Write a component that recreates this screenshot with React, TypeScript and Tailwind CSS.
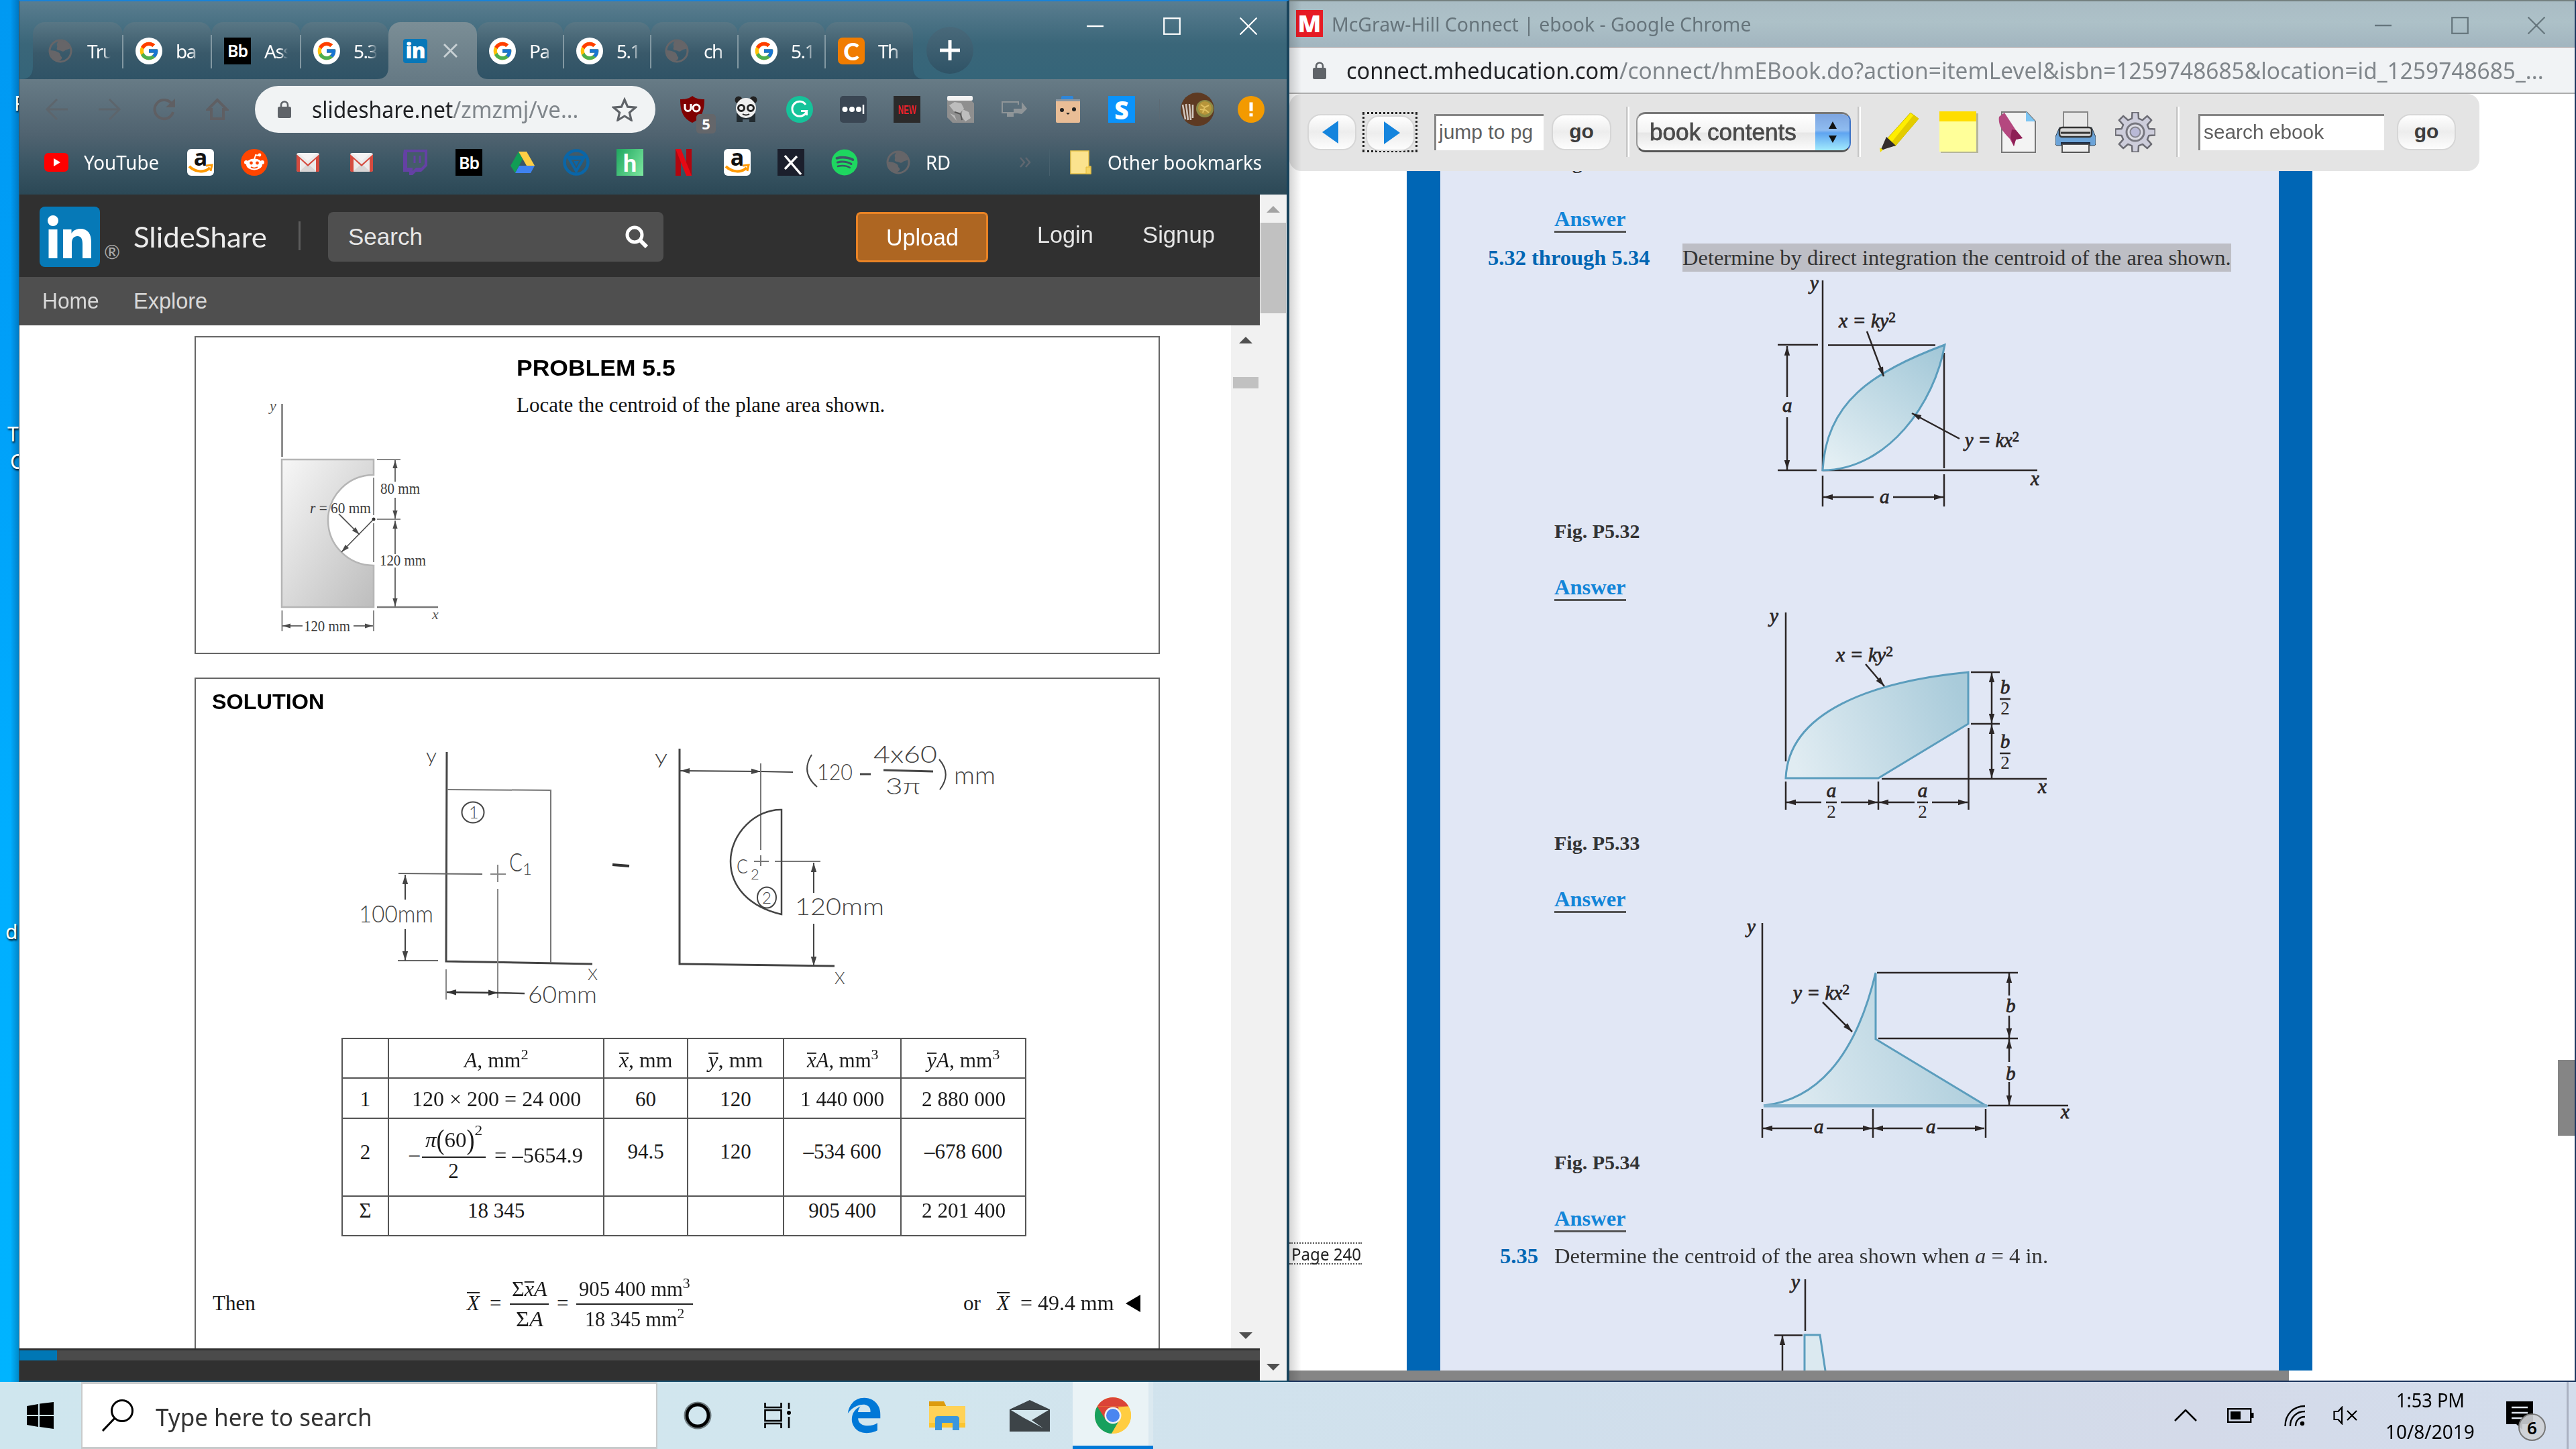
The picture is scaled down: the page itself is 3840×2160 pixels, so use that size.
import React, { useLayoutEffect, useRef, useState } from "react";
import { FcGoogle } from "react-icons/fc";
import { FaSpotify } from "react-icons/fa";
import { FaEdgeLegacy } from "react-icons/fa6";

/* ---------- helpers ---------- */

// Stretches or squeezes one line of text to the width of its box.
function Fit({ className = "", children }: { className?: string; children: React.ReactNode }) {
  const outer = useRef<HTMLSpanElement>(null);
  const inner = useRef<HTMLSpanElement>(null);
  const [scale, setScale] = useState(1);
  useLayoutEffect(() => {
    if (outer.current && inner.current && inner.current.offsetWidth > 0) {
      setScale(outer.current.clientWidth / inner.current.offsetWidth);
    }
  }, []);
  return (
    <span ref={outer} className={`inline-block shrink-0 whitespace-nowrap ${className}`}>
      <span ref={inner} className="inline-block origin-left" style={{ transform: `scaleX(${scale})` }}>
        {children}
      </span>
    </span>
  );
}

type ArrProps = { p: [number, number, number, number]; start?: boolean; end?: boolean; c?: string; w?: number; s?: number };
// Line with optional solid arrow heads.
function Arr({ p, start, end, c = "#2b2626", w = 2.5, s = 14 }: ArrProps) {
  const [x1, y1, x2, y2] = p;
  const len = Math.hypot(x2 - x1, y2 - y1) || 1;
  const ux = (x2 - x1) / len;
  const uy = (y2 - y1) / len;
  const h = s * 0.3;
  const head = (x: number, y: number, d: number) =>
    `${x},${y} ${x - d * ux * s - uy * h},${y - d * uy * s + ux * h} ${x - d * ux * s + uy * h},${y - d * uy * s - ux * h}`;
  return (
    <g>
      <line x1={x1} y1={y1} x2={x2} y2={y2} stroke={c} strokeWidth={w} />
      {end && <polygon points={head(x2, y2, 1)} fill={c} />}
      {start && <polygon points={head(x1, y1, -1)} fill={c} />}
    </g>
  );
}

function L({ d, c = "#2b2626", w = 2.5 }: { d: string; c?: string; w?: number }) {
  return <path d={d} stroke={c} strokeWidth={w} fill="none" />;
}

type TxProps = { x: number; y: number; s: number; w?: number; c?: string; className?: string; children: React.ReactNode };
function Tx({ x, y, s, w, c = "#333", className = "", children }: TxProps) {
  return (
    <text x={x} y={y} fontSize={s} fill={c} className={className} textLength={w} lengthAdjust={w ? "spacingAndGlyphs" : undefined}>
      {children}
    </text>
  );
}

/* ---------- small icons ---------- */

const Globe = () => (
  <svg viewBox="0 0 40 40" className="h-10 w-10">
    <circle cx="20" cy="20" r="16" fill="none" stroke="#666568" strokeWidth="3" />
    <path d="M17 5c9-2 16 3 18 11-3 2-6 1-9 4-3 2-5-1-8-1-3 0-4-2-3-4 1-3-1-4 0-6zM5 19c4 0 9 1 12 3 4 2 2 5 5 7 1 3-2 5-5 6C9 33 4 27 5 19z" fill="#666568" />
  </svg>
);
const GIcon = () => (
  <span className="flex h-10 w-10 items-center justify-center rounded-full bg-white">
    <FcGoogle className="h-8 w-8" />
  </span>
);
const Bb = () => (
  <span className="flex h-10 w-10 items-center justify-center bg-black font-['Noto_Sans'] text-[25px] font-semibold tracking-[-1px] text-white">Bb</span>
);
const Chegg = () => (
  <span className="flex h-10 w-10 items-center justify-center rounded-[7px] bg-[#f07c00] font-['Lato'] text-[36px] leading-none font-black text-white">C</span>
);
const InIcon = () => (
  <span className="flex h-9 w-9 items-center justify-center rounded-[4px] bg-[#0877b8] font-['Open_Sans'] text-[31px] leading-none font-extrabold tracking-[-1px] text-white">in</span>
);
const Amazon = () => (
  <span className="relative flex h-10 w-10 items-start justify-center overflow-hidden rounded-[6px] bg-white">
    <span className="font-['Open_Sans'] text-[34px] leading-[24px] font-bold text-[#111]">a</span>
    <svg viewBox="0 0 40 40" className="absolute inset-0 h-10 w-10">
      <path d="M3 26c9 9 23 10 31 2" stroke="#f90" strokeWidth="4" fill="none" />
      <path d="M28 25l9-1-2 9" stroke="#f90" strokeWidth="3" fill="none" />
    </svg>
  </span>
);
const Reddit = () => (
  <span className="flex h-10 w-10 items-center justify-center rounded-full bg-[#ff4500]">
    <svg viewBox="0 0 40 40" className="h-10 w-10">
      <ellipse cx="20" cy="23" rx="12" ry="8.5" fill="#fff" />
      <circle cx="8" cy="20" r="3" fill="#fff" />
      <circle cx="32" cy="20" r="3" fill="#fff" />
      <circle cx="28" cy="9" r="2.4" fill="#fff" />
      <path d="M20 16l2-7 6 1" stroke="#fff" strokeWidth="1.8" fill="none" />
      <circle cx="15.5" cy="21" r="2.4" fill="#ff4500" />
      <circle cx="24.5" cy="21" r="2.4" fill="#ff4500" />
      <path d="M15 27q5 3 10 0" stroke="#ff4500" strokeWidth="1.6" fill="none" />
    </svg>
  </span>
);
const Gmail = () => (
  <svg viewBox="0 0 36 28" className="h-7 w-9">
    <rect x="1" y="0" width="34" height="28" rx="3" fill="#eceaea" />
    <path d="M5 28L18 16l13 12z" fill="#d9d6d6" />
    <path d="M1 2v24q0 2 2 2h3V9l12 11L30 9v19h3q2 0 2-2V2L18 17z" fill="#d54b3f" />
    <path d="M4 0h28L18 12z" fill="#f5f3f3" />
  </svg>
);
const Twitch = () => (
  <svg viewBox="0 0 40 40" className="h-10 w-10">
    <path d="M3 1h35v24l-9 9h-8l-5 5h-5v-5H2V8z" fill="#6441a4" />
    <path d="M8 5h26v18l-5 5h-8l-5 5v-5H8z" fill="#445c6a" />
    <path d="M19 10v11M27 10v11" stroke="#6441a4" strokeWidth="3" />
  </svg>
);
const Drive = () => (
  <svg viewBox="0 0 40 36" className="h-9 w-10">
    <path d="M14 2l6 11L9 34 2 23z" fill="#119d55" />
    <path d="M14 2h12l12 21H26z" fill="#ffcf44" />
    <path d="M15 23h23l-6 11H9z" fill="#3f82f0" />
  </svg>
);
const BlueBadge = () => (
  <svg viewBox="0 0 40 40" className="h-10 w-10">
    <circle cx="20" cy="20" r="17.5" fill="none" stroke="#0a66a8" strokeWidth="4.5" />
    <path d="M5 12h30M9 14h22L20 33z" stroke="#0a66a8" strokeWidth="4" fill="none" />
    <path d="M16 18h8l-4 8z" fill="#0a66a8" />
  </svg>
);
const Honey = () => (
  <span className="flex h-10 w-10 items-center justify-center bg-[linear-gradient(120deg,#1fa65f,#7de8a0)] font-['Lato'] text-[36px] leading-none font-black text-white">h</span>
);
const Netflix = () => (
  <svg viewBox="0 0 24 40" className="h-10 w-6">
    <path d="M0 0h8v40H0zM16 0h8v40h-8z" fill="#b1060f" />
    <path d="M0 0h8l16 40h-8z" fill="#e50914" />
  </svg>
);
const XIcon = () => (
  <svg viewBox="0 0 40 40" className="h-10 w-10">
    <rect width="40" height="40" fill="#1b1f2c" />
    <path d="M11 10l24 28M29 11L11 30" stroke="#fff" strokeWidth="3.4" />
  </svg>
);
const Lock = () => (
  <svg viewBox="0 0 20 26" className="h-[26px] w-5 shrink-0">
    <rect y="9" width="20" height="17" rx="2.5" fill="#5f6368" />
    <path d="M5 10V6.5a5 5 0 0 1 10 0V10" stroke="#5f6368" strokeWidth="2.6" fill="none" />
  </svg>
);

/* ---------- left window: chrome ---------- */

const tabs: { w: string; icon: React.ReactNode; t: string; sep?: boolean; active?: boolean }[] = [
  { w: "w-[134px] pl-[21px]", icon: <Globe />, t: "Tru", sep: true },
  { w: "w-[132px] pl-[19px]", icon: <GIcon />, t: "ba", sep: true },
  { w: "w-[133px] pl-[19px]", icon: <Bb />, t: "Ass", sep: true },
  { w: "w-[131px] pl-[19px]", icon: <GIcon />, t: "5.3" },
  { w: "w-[132px] pl-[22px]", icon: <InIcon />, t: "", active: true },
  { w: "w-[129px] pl-[18px]", icon: <GIcon />, t: "Pa", sep: true },
  { w: "w-[130px] pl-[19px]", icon: <GIcon />, t: "5.1", sep: true },
  { w: "w-[130px] pl-[19px]", icon: <Globe />, t: "ch", sep: true },
  { w: "w-[130px] pl-[19px]", icon: <GIcon />, t: "5.1", sep: true },
  { w: "w-[131px] pl-[19px]", icon: <Chegg />, t: "Th" },
];

const Flare = ({ side, color }: { side: "l" | "r"; color: string }) => (
  <svg viewBox="0 0 18 18" className={`absolute bottom-0 z-10 h-[18px] w-[18px] ${side === "l" ? "-left-[18px]" : "-right-[18px]"}`}>
    <path d={side === "l" ? "M18 0v18H0Q18 18 18 0z" : "M0 0v18h18Q0 18 0 0z"} fill={color} />
  </svg>
);

function TabStrip() {
  return (
    <div className="flex h-[116px] items-end bg-[linear-gradient(180deg,#5a7d8f_0%,#3a6679_55%,#356579_100%)]">
      <div className="ml-[20px] flex h-[85px]">
        {tabs.map((t, i) => (
          <div
            key={i}
            className={`relative flex h-[85px] items-center rounded-t-[18px] ${t.w} ${
              t.active ? "bg-[linear-gradient(180deg,#7b8e96,#667a85)]" : "bg-[linear-gradient(180deg,#597785_0%,#39596a_55%,#2f5366_100%)]"
            }`}
          >
            {(i === 0 || t.active) && <Flare side="l" color={t.active ? "#677b86" : "#2f5366"} />}
            {(i === 9 || t.active) && <Flare side="r" color={t.active ? "#677b86" : "#2f5366"} />}
            <span className="flex shrink-0 items-center">{t.icon}</span>
            {t.active ? (
              <svg viewBox="0 0 22 22" className="ml-[24px] h-[21px] w-[21px]">
                <path d="M1 1l20 20M21 1L1 21" stroke="#c8d0d4" strokeWidth="3" />
              </svg>
            ) : (
              <span className="ml-[20px] w-[35px] overflow-hidden font-['Noto_Sans'] text-[28px] leading-[40px] tracking-[-1.5px] whitespace-nowrap text-white [mask-image:linear-gradient(90deg,#000_65%,transparent)]">
                {t.t}
              </span>
            )}
            {t.sep && <span className="absolute top-[19px] -right-[1px] z-10 h-[50px] w-[2px] bg-[#8298a2]" />}
          </div>
        ))}
      </div>
      <div className="mb-[8px] ml-[20px] flex h-[70px] w-[70px] items-center justify-center rounded-full bg-[linear-gradient(180deg,#49697a,#2f5366)]">
        <svg viewBox="0 0 30 30" className="h-[30px] w-[30px]">
          <path d="M15 0v30M0 15h30" stroke="#fff" strokeWidth="5" />
        </svg>
      </div>
      <div className="ml-auto flex h-[74px] self-start">
        <WinButtons color="#fff" />
      </div>
    </div>
  );
}

function WinButtons({ color }: { color: string }) {
  return (
    <>
      <span className="flex w-[114px] items-center justify-center">
        <svg viewBox="0 0 26 26" className="h-[26px] w-[26px]"><path d="M0 13h25" stroke={color} strokeWidth="2.4" /></svg>
      </span>
      <span className="flex w-[114px] items-center justify-center">
        <svg viewBox="0 0 26 26" className="h-[26px] w-[26px]"><rect x="1.2" y="1.2" width="23.6" height="23.6" fill="none" stroke={color} strokeWidth="2.2" /></svg>
      </span>
      <span className="flex w-[114px] items-center justify-center">
        <svg viewBox="0 0 26 26" className="h-[26px] w-[26px]"><path d="M.5.5l25 25M25.5.5l-25 25" stroke={color} strokeWidth="2.2" /></svg>
      </span>
    </>
  );
}

const navIcons = [
  <svg viewBox="0 0 34 34" className="h-[34px] w-[34px]"><path d="M34 17H3M18 2L3 17l15 15" stroke="#5d656c" strokeWidth="3" fill="none" /></svg>,
  <svg viewBox="0 0 34 34" className="h-[34px] w-[34px]"><path d="M0 17h31M16 2l15 15-15 15" stroke="#5d656c" strokeWidth="3" fill="none" /></svg>,
  <svg viewBox="0 0 34 34" className="h-[34px] w-[34px]"><path d="M29 9a14 14 0 1 0 2 12" stroke="#5f5f63" strokeWidth="4" fill="none" /><path d="M34 1v13H20z" fill="#5f5f63" /></svg>,
  <svg viewBox="0 0 34 34" className="h-[34px] w-[34px]"><path d="M17 3L3 17h5v14h18V17h5z" stroke="#5f5f63" strokeWidth="4" fill="none" /></svg>,
];

const extIcons = [
  <span className="relative">
    <svg viewBox="0 0 40 40" className="h-10 w-10">
      <path d="M20 0c5 4 10 5 18 5 0 18-4 28-18 35C6 33 2 23 2 5c8 0 13-1 18-5z" fill="#800000" />
      <path d="M9 12v6a4.500 4.500 0 0 0 9 0v-6" stroke="#fff" strokeWidth="3" fill="none" />
      <circle cx="26" cy="18" r="5" stroke="#fff" strokeWidth="3" fill="none" />
    </svg>
    <span className="absolute top-[27px] left-[26px] flex h-[29px] w-[29px] items-center justify-center rounded-[5px] bg-[#64666a] font-['Noto_Sans'] text-[22px] font-bold text-white">5</span>
  </span>,
  <svg viewBox="0 0 40 40" className="h-10 w-10">
    <circle cx="9" cy="6" r="5.500" fill="#222" /><circle cx="31" cy="6" r="5.500" fill="#222" />
    <path d="M6 26h28v13h-9v-4H15v4H6z" fill="#222b30" />
    <ellipse cx="20" cy="18" rx="15" ry="15" fill="#eee" />
    <ellipse cx="13" cy="18" rx="4.500" ry="4.500" fill="none" stroke="#222" strokeWidth="3" /><ellipse cx="27" cy="18" rx="4.500" ry="4.500" fill="none" stroke="#222" strokeWidth="3" />
    <path d="M15 27q5 3 10 0" stroke="#222" strokeWidth="2" fill="none" />
  </svg>,
  <svg viewBox="0 0 40 40" className="h-10 w-10">
    <circle cx="20" cy="20" r="20" fill="#15c39a" />
    <path d="M29 13a11 11 0 1 0 1.500 9.500H22M30.500 22v7" stroke="#fff" strokeWidth="3" fill="none" />
  </svg>,
  <svg viewBox="0 0 40 40" className="h-10 w-10">
    <rect width="40" height="40" rx="5" fill="#3a4653" />
    <circle cx="7.500" cy="20" r="4" fill="#fff" /><circle cx="18" cy="20" r="4" fill="#fff" /><circle cx="28" cy="20" r="4" fill="#fff" />
    <path d="M35 13v14" stroke="#fff" strokeWidth="2.500" />
  </svg>,
  <span className="flex h-10 w-10 items-center justify-center bg-[#2b2a2a] text-[#f0222b]">
    <Fit className="w-[27px] font-['Liberation_Sans'] text-[19px] leading-none font-bold">NEW</Fit>
  </span>,
  <svg viewBox="0 0 42 40" className="h-10 w-[42px]">
    <path d="M1 3h32l8 8v29H9l-8-8z" fill="#8f8f8f" /><rect x="1" y="0" width="38" height="7" rx="2" fill="#f3f3f3" />
    <path d="M4 14l8-5 10 2 4 8-6 6-9-2zM24 20l9 4 3 9-8 5-6-8zM5 26l7 3 3 8" fill="#bdbdbd" /><path d="M12 24l9 3 2 9" stroke="#555" strokeWidth="2" fill="none" />
  </svg>,
  <svg viewBox="0 0 38 26" className="h-[26px] w-[38px]">
    <path d="M1 2h24v4M1 1v17h24" stroke="#8f9598" strokeWidth="2" fill="none" /><path d="M8 18h10v6H8zM18 18V12h12V2l8 10-8 8z" fill="#8f9598" />
  </svg>,
  <svg viewBox="0 0 40 40" className="h-10 w-10">
    <rect x="10" y="0" width="18" height="7" rx="2" fill="#2f86d8" /><rect x="2" y="5" width="36" height="35" rx="2" fill="#e9bd96" />
    <path d="M2 5h36v3H2z" fill="#8a97a3" />
    <circle cx="11" cy="21" r="3" fill="#222" /><circle cx="29" cy="20" r="3" fill="#222" /><path d="M17 25h6l-3 3z" fill="#222" />
  </svg>,
  <span className="flex h-10 w-10 items-center justify-center bg-[#0a93fb] font-['Open_Sans'] text-[37px] leading-none font-extrabold text-white">S</span>,
];

function Toolbar() {
  return (
    <div className="flex h-[90px] items-center pl-[15px]">
      {navIcons.map((n, i) => (
        <span key={i} className="flex w-20 shrink-0 items-center justify-center">{n}</span>
      ))}
      <div className="ml-[16px] flex h-[70px] w-[597px] shrink-0 items-center rounded-full bg-[#f1f3f4] pr-[27px] pl-[34px]">
        <Lock />
        <span className="ml-[31px] flex font-['Noto_Sans'] text-[34px] leading-[50px]">
          <Fit className="w-[210px] text-[#202124]">slideshare.net</Fit>
          <Fit className="w-[187px] text-[#80868b]">/zmzmj/ve...</Fit>
        </span>
        <svg viewBox="0 0 38 36" className="ml-auto h-9 w-[38px]">
          <path d="M19 3.500l4.600 10.700 11.600 1-8.800 7.600 2.700 11.300L19 28l-10.100 6.100 2.700-11.300-8.800-7.600 11.600-1z" fill="none" stroke="#5f6368" strokeWidth="3.200" />
        </svg>
      </div>
      <div className="ml-[15px] flex">
        {extIcons.map((n, i) => (
          <span key={i} className="flex h-10 w-20 items-center justify-center">{n}</span>
        ))}
      </div>
      <span className="mr-[16px] ml-[16px] h-[30px] w-[1px] bg-[#5c6a74]" />
      <span className="flex w-20 justify-center">
        <svg viewBox="0 0 50 50" className="h-[50px] w-[50px]">
          <circle cx="25" cy="25" r="25" fill="#5e3a22" />
          <path d="M3 18l4 22M8 17l3 24M13 17l2 24M18 18v20" stroke="#cfc5bd" strokeWidth="2.600" />
          <circle cx="36" cy="24" r="13" fill="#8c8a45" /><circle cx="36" cy="23" r="10" fill="#b7953a" />
          <path d="M30 18l6 4 6-3M29 25l8 1 5 4M33 30l3-9" stroke="#e0c060" strokeWidth="2" fill="none" />
        </svg>
      </span>
      <span className="flex w-20 justify-center">
        <svg viewBox="0 0 40 40" className="h-10 w-10">
          <circle cx="20" cy="20" r="20" fill="#f39a00" />
          <path d="M20 9.500v13M20 26v4.500" stroke="#fff" strokeWidth="5" />
        </svg>
      </span>
    </div>
  );
}

const bookmarks = [<Amazon />, <Reddit />, <Gmail />, <Gmail />, <Twitch />, <Bb />, <Drive />, <BlueBadge />, <Honey />, <Netflix />, <Amazon />, <XIcon />,
  <FaSpotify className="h-10 w-10 text-[#1ed760]" />, <Globe />];

function Bookmarks() {
  return (
    <div className="flex h-[68px] items-center pl-[37px] font-['Noto_Sans'] text-[29px] leading-[40px] text-white">
      <svg viewBox="0 0 36 28" className="h-[28px] w-[36px]">
        <rect width="36" height="28" rx="6" fill="#f00" /><path d="M14 8l10 6-10 6z" fill="#fff" />
      </svg>
      <Fit className="ml-[23px] w-[112px]">YouTube</Fit>
      <div className="ml-[22px] flex">
        {bookmarks.map((b, i) => (
          <span key={i} className="flex w-20 items-center justify-center">{b}</span>
        ))}
      </div>
      <Fit className="ml-[1px] w-[37px]">RD</Fit>
      <svg viewBox="0 0 18 16" className="ml-[103px] h-4 w-[18px]">
        <path d="M1 1l6 7-6 7M9 1l6 7-6 7" stroke="#5f6770" strokeWidth="2.500" fill="none" />
      </svg>
      <span className="ml-[26px] h-[40px] w-[1px] bg-[#47606d]" />
      <svg viewBox="0 0 32 36" className="ml-[30px] h-9 w-8">
        <path d="M1 1h27v23h3v11H1z" fill="#fbe38e" stroke="#e9c44a" strokeWidth="1.500" /><path d="M24 35V25h7v10z" fill="#f5d564" stroke="#e3bb3c" />
      </svg>
      <Fit className="ml-[24px] w-[230px]">Other bookmarks</Fit>
    </div>
  );
}

/* ---------- left window: page ---------- */

function SlideHeader() {
  return (
    <>
      <div className="flex h-[123px] bg-[#303030] pt-[18px] font-['Liberation_Sans'] text-[35px] text-[#e6e6e6]">
        <svg viewBox="0 0 90 90" className="ml-[30px] h-[90px] w-[90px]">
          <rect width="90" height="90" rx="8" fill="#0679b7" />
          <circle cx="20" cy="21" r="8" fill="#fff" />
          <rect x="13.500" y="34" width="13" height="43" fill="#fff" />
          <path d="M35 34h12.500v6c3-5 8-7 13-7 12 0 16.500 8 16.500 20v24H64V56c0-7-1.500-12-7.500-12-6.500 0-8.500 5-8.500 11v22H35z" fill="#fff" />
        </svg>
        <span className="mt-[52px] ml-[6px] w-[24px] font-['Lato'] text-[29px] leading-[30px] text-[#aaa]">®</span>
        <Fit className="mt-[20px] ml-[20px] w-[199px] font-['Lato'] text-[42px] leading-[50px] text-[#ececec]">SlideShare</Fit>
        <span className="mt-[22px] ml-[47px] h-[43px] w-[3px] bg-[#5c5c5c]" />
        <div className="mt-[8px] ml-[41px] flex h-[74px] w-[500px] items-center rounded-[8px] bg-[#4f4f4f] pr-[23px] pl-[30px]">
          <span className="leading-[40px]">Search</span>
          <svg viewBox="0 0 34 34" className="ml-auto h-[34px] w-[34px]">
            <circle cx="14" cy="14" r="11" fill="none" stroke="#fff" strokeWidth="5" />
            <path d="M22 22l10 10" stroke="#fff" strokeWidth="6" />
          </svg>
        </div>
        <div className="mt-[8px] ml-[287px] flex h-[75px] w-[197px] items-center justify-center rounded-[7px] border-3 border-[#e98325] bg-[#ae6622] text-white">
          <Fit className="w-[108px] leading-[40px]">Upload</Fit>
        </div>
        <Fit className="mt-[22px] ml-[73px] w-[84px] leading-[40px]">Login</Fit>
        <Fit className="mt-[22px] ml-[73px] w-[108px] leading-[40px]">Signup</Fit>
      </div>
      <div className="flex h-[72px] bg-[#4f4f4f] pt-[16px] pl-[34px] font-['Liberation_Sans'] text-[32.5px] leading-[40px] text-[#d9d9d9]">
        <Fit className="w-[85px]">Home</Fit>
        <Fit className="ml-[51px] w-[110px]">Explore</Fit>
      </div>
    </>
  );
}

const serif = "font-['Liberation_Serif']";

function PlateFigure() {
  const g = "#4a4a4a";
  return (
    <svg viewBox="380 590 300 370" className={`mt-[87px] ml-[87px] h-[370px] w-[300px] ${serif}`}>
      <defs>
        <linearGradient id="plate" x1="0" y1="0" x2="1" y2="1"><stop offset="0" stopColor="#f7f7f7" /><stop offset="1" stopColor="#bdbdbd" /></linearGradient>
      </defs>
      <path d="M421 685H558V708A68 67.500 0 0 0 558 843V905H421Z" fill="url(#plate)" stroke="#b5b5b5" strokeWidth="2.500" />
      <L d="M421.500 602V681M563 905H654" c="#777" w={2.5} />
      <L d="M558 712V768M558 780V838M563 685H598M563 774H598M421.500 910V941M558 910V941" c="#888" w={2} />
      <Arr p={[590, 686, 590, 718]} start c={g} w={1.6} s={12} />
      <Arr p={[590, 742, 590, 773]} end c={g} w={1.6} s={12} />
      <Arr p={[590, 776, 590, 826]} start c={g} w={1.6} s={12} />
      <Arr p={[590, 846, 590, 904]} end c={g} w={1.6} s={12} />
      <Arr p={[422, 933, 452, 933]} start c={g} w={1.6} s={12} />
      <Arr p={[528, 933, 557, 933]} end c={g} w={1.6} s={12} />
      <Arr p={[558, 774, 510, 823]} end c={g} w={1.6} s={12} />
      <Arr p={[506, 766, 537, 797]} end c={g} w={1.6} s={12} />
      <circle cx="558" cy="774" r="2.500" fill="#333" />
      <Tx x={568} y={736} s={23} w={59} c="#3d3d3d">80 mm</Tx>
      <Tx x={567} y={843} s={23} w={69} c="#3d3d3d">120 mm</Tx>
      <Tx x={454} y={941} s={23} w={69} c="#3d3d3d">120 mm</Tx>
      <Tx x={463} y={765} s={23} w={91} c="#3d3d3d"><tspan fontStyle="italic">r</tspan> = 60 mm</Tx>
      <Tx x={403} y={612} s={22} c="#555" className="italic">y</Tx>
      <Tx x={645} y={923} s={22} c="#555" className="italic">x</Tx>
    </svg>
  );
}

function Sketches() {
  const p = "#444";
  return (
    <svg viewBox="520 1100 980 410" className="mt-[34px] ml-[227px] block h-[410px] w-[980px] font-['Lato'] font-light">
      <L d="M667 1121L666 1433L884 1437" c="#444" w={3} />
      <L d="M667 1177L822 1178V1435" c="#777" w={2} />
      <ellipse cx="706" cy="1211" rx="16.500" ry="15.500" fill="none" stroke={p} strokeWidth="2" />
      <Tx x={700} y={1220} s={25} c={p}>1</Tx>
      <L d="M743 1289V1315M743 1325V1488M732 1303H755M666 1445V1490" c="#888" w={2} />
      <L d="M595 1302L720 1303M594 1432H654" c="#666" w={2.2} />
      <Arr p={[605, 1304, 605, 1341]} start c={p} w={2} />
      <Arr p={[605, 1385, 605, 1432]} end c={p} w={2} />
      <Arr p={[667, 1479, 743, 1480]} start end c="#333" w={2.4} />
      <L d="M743 1480L783 1481" c={p} w={2.4} />
      <Tx x={636} y={1137} s={30} w={16} c={p}>y</Tx>
      <Tx x={760} y={1299} s={37} w={20} c={p}>C</Tx>
      <Tx x={780} y={1304} s={24} c={p}>1</Tx>
      <Tx x={536} y={1375} s={35} w={111} c={p}>100mm</Tx>
      <Tx x={788} y={1495} s={35} w={103} c={p}>60mm</Tx>
      <Tx x={877} y={1461} s={24} c={p}>X</Tx>
      <L d="M914 1289L939 1291" c="#333" w={4} />

      <L d="M1014 1116V1437L1245 1440" c="#444" w={3} />
      <Arr p={[1015, 1149, 1135, 1150]} start end c={p} w={2} />
      <L d="M1135 1150L1183 1151" c={p} w={2} />
      <L d="M1135 1138V1267M1135 1275V1291M1125 1284H1147M1156 1284H1224" c="#777" w={2} />
      <path d="M1166 1207V1363C1118 1352 1090 1322 1090 1284C1090 1242 1128 1206 1166 1207Z" fill="none" stroke={p} strokeWidth="2.500" />
      <Tx x={977} y={1139} s={30} w={19} c={p}>y</Tx>
      <Tx x={1099} y={1302} s={30} w={17} c={p}>C</Tx>
      <Tx x={1120} y={1311} s={22} c={p}>2</Tx>
      <ellipse cx="1144" cy="1338" rx="14" ry="15.500" fill="none" stroke={p} strokeWidth="2" />
      <Tx x={1137} y={1347} s={24} c={p}>2</Tx>
      <Arr p={[1214, 1286, 1214, 1331]} start c={p} w={2} />
      <Arr p={[1214, 1377, 1214, 1440]} end c={p} w={2} />
      <Tx x={1186} y={1364} s={35} w={133} c={p}>120mm</Tx>
      <Tx x={1245} y={1467} s={25} c={p}>X</Tx>
      <L d="M1211 1125Q1194 1152 1219 1173M1401 1132Q1420 1154 1402 1177" c={p} w={2} />
      <Tx x={1219} y={1163} s={34} w={53} c={p}>120</Tx>
      <L d="M1283 1154H1299" c={p} w={3} />
      <Tx x={1303} y={1137} s={36} w={95} c={p}>4x60</Tx>
      <L d="M1318 1148L1392 1150" c={p} w={3} />
      <Tx x={1321} y={1184} s={34} w={52} c={p}>3π</Tx>
      <Tx x={1423} y={1169} s={37} w={62} c={p}>mm</Tx>
    </svg>
  );
}

const Bar = ({ children }: { children: React.ReactNode }) => (
  <span className="inline-block border-t-2 border-[#333] leading-[20px] italic">{children}</span>
);
const BigBar = ({ children }: { children: React.ReactNode }) => (
  <span className="inline-block border-t-2 border-[#222] leading-[30px] italic">{children}</span>
);
const Sup = ({ children }: { children: React.ReactNode }) => <span className="inline-block -translate-y-[12px] text-[22px] leading-none">{children}</span>;

const headCells = [
  null,
  <Fit className="w-[96px]"><i>A</i>, mm<Sup>2</Sup></Fit>,
  <Fit className="w-[80px]"><Bar>x</Bar>, mm</Fit>,
  <Fit className="w-[82px]"><Bar>y</Bar>, mm</Fit>,
  <Fit className="w-[106px]"><Bar>x</Bar><i>A</i>, mm<Sup>3</Sup></Fit>,
  <Fit className="w-[108px]"><Bar>y</Bar><i>A</i>, mm<Sup>3</Sup></Fit>,
];

function DataTable() {
  const cell = "flex justify-center border-r-2 border-b-2 border-[#555]";
  return (
    <div className={`mt-[37px] ml-[217px] grid w-[1021px] grid-cols-[69px_321px_125px_143px_175px_186px] grid-rows-[59px_60px_116px_59px] border-t-2 border-l-2 border-[#555] ${serif} text-[31px] text-[#1a1a1a]`}>
      {headCells.map((c, i) => <div key={i} className={`${cell} pt-[3px] leading-[57px]`}>{c}</div>)}
      {["1", "120 × 200 = 24 000", "60", "120", "1 440 000", "2 880 000"].map((c, i) => (
        <div key={i} className={`${cell} leading-[61px]`}>
          {i === 1 ? <Fit className="w-[252px]">{c}</Fit> : i > 3 ? <Fit className="w-[125px]">{c}</Fit> : c}
        </div>
      ))}
      <div className={`${cell} leading-[99px]`}>2</div>
      <div className="flex border-r-2 border-b-2 border-[#555] pt-[10px] pl-[30px]">
        <span className="mt-[23px] leading-[40px]">–</span>
        <div className="ml-[3px] flex h-[90px] w-[95px] flex-col items-center">
          <Fit className="h-[46px] w-[85px] leading-[44px]">
            <i>π</i><span className="inline-block scale-y-125 text-[34px] leading-none">(</span>60<span className="inline-block scale-y-125 text-[34px] leading-none">)</span>
            <span className="inline-block -translate-y-[18px] text-[22px] leading-none">2</span>
          </Fit>
          <span className="h-[2px] w-full shrink-0 bg-[#222]" />
          <span className="leading-[40px]">2</span>
        </div>
        <Fit className="mt-[25px] ml-[13px] w-[132px] leading-[40px]">= –5654.9</Fit>
      </div>
      {["94.5", "120", "–534 600", "–678 600"].map((c, i) => <div key={i} className={`${cell} leading-[97px]`}>{c}</div>)}
      {["Σ", "18 345", "", "", "905 400", "2 201 400"].map((c, i) => (
        <div key={i} className={`${cell} leading-[41px]`}>{i === 5 ? <Fit className="w-[125px]">{c}</Fit> : c}</div>
      ))}
    </div>
  );
}

function Result() {
  return (
    <div className={`mt-[59px] flex h-[86px] items-center pl-[25px] ${serif} text-[31px] leading-[40px] text-[#1a1a1a]`}>
      <Fit className="mb-[5px] w-[64px]">Then</Fit>
      <span className="mb-[5px] ml-[315px] w-[24px]"><BigBar>X</BigBar></span>
      <span className="mb-[5px] ml-[10px] w-[18px]">=</span>
      <div className="ml-[12px] flex w-[58px] flex-col items-center">
        <Fit className="h-[41px] w-[53px]">Σ<Bar>x</Bar><i>A</i></Fit>
        <span className="h-[2px] w-full shrink-0 bg-[#222]" />
        <Fit className="h-[43px] w-[41px] leading-[44px]">Σ<i>A</i></Fit>
      </div>
      <span className="mb-[5px] ml-[12px] w-[18px]">=</span>
      <div className="ml-[11px] flex w-[174px] flex-col items-center">
        <Fit className="h-[41px] w-[166px]">905 400 mm<Sup>3</Sup></Fit>
        <span className="h-[2px] w-full shrink-0 bg-[#222]" />
        <Fit className="h-[43px] w-[148px] leading-[44px]">18 345 mm<Sup>2</Sup></Fit>
      </div>
      <span className="mb-[5px] ml-[403px] w-[26px]">or</span>
      <span className="mb-[5px] ml-[24px] w-[24px]"><BigBar>X</BigBar></span>
      <Fit className="mb-[5px] ml-[11px] w-[139px]">= 49.4 mm</Fit>
      <svg viewBox="0 0 22 26" className="mb-[5px] ml-[18px] h-[26px] w-[22px]"><path d="M22 0v26L0 13z" fill="#000" /></svg>
    </div>
  );
}

const Tri = ({ up, c }: { up?: boolean; c: string }) => (
  <svg viewBox="0 0 20 10" className="h-[10px] w-[20px]"><path d={up ? "M0 10L10 0l10 10z" : "M0 0l10 10L20 0z"} fill={c} /></svg>
);

function LeftWindow() {
  return (
    <div className="flex h-[2060px] w-[1894px] shrink-0 flex-col border-t-2 border-r-4 border-b-2 border-l border-t-[#1883d7] border-r-[#19435b] border-b-[#1a4f6d] border-l-[#27566b] bg-white">
      <TabStrip />
      <div className="h-[172px] bg-[linear-gradient(180deg,#677b86_0%,#506370_48%,#3c5765_72%,#2b4856_100%)]">
        <Toolbar />
        <Bookmarks />
      </div>
      <div className="flex h-[1768px]">
        <div className="flex h-[1768px] w-[1849px] flex-col">
          <SlideHeader />
          <div className="flex h-[1525px] overflow-hidden">
            <div className="h-[1525px] w-[1806px] overflow-hidden bg-white pt-[16px] pl-[261px]">
              <section className="flex h-[474px] w-[1439px] items-start border-2 border-[#666]">
                <PlateFigure />
                <div className="mt-[25px] ml-[91px] flex flex-col">
                  <Fit className="w-[237px] font-['Liberation_Sans'] text-[34px] leading-[40px] font-bold text-black">PROBLEM 5.5</Fit>
                  <Fit className={`mt-[16px] w-[549px] ${serif} text-[31px] leading-[40px] text-[#111]`}>Locate the centroid of the plane area shown.</Fit>
                </div>
              </section>
              <section className="mt-[35px] h-[1010px] w-[1439px] border-2 border-[#666] pt-[14px]">
                <Fit className="ml-[24px] h-[40px] w-[167px] align-top font-['Liberation_Sans'] text-[32px] leading-[41px] font-bold text-black">SOLUTION</Fit>
                <Sketches />
                <DataTable />
                <Result />
              </section>
            </div>
            <div className="flex h-[1525px] w-[43px] flex-col items-center bg-[#f1f1f1] pt-[17px] pb-[14px]">
              <Tri up c="#505050" />
              <span className="mt-[50px] h-[17px] w-[38px] bg-[#c1c1c1]" />
              <span className="mt-auto flex"><Tri c="#505050" /></span>
            </div>
          </div>
          <div className="h-[48px] bg-[#303030] pt-[3px]">
            <div className="h-[15px] bg-[#4b4b4b]"><div className="h-[15px] w-[56px] bg-[#0077b5]" /></div>
          </div>
        </div>
        <div className="flex h-[1768px] w-[40px] flex-col items-center bg-[#f1f1f1] pt-[17px] pb-[15px]">
          <Tri up c="#a3a3a3" />
          <span className="mt-[15px] h-[135px] w-[38px] bg-[#c1c1c1]" />
          <span className="mt-auto flex"><Tri c="#505050" /></span>
        </div>
      </div>
    </div>
  );
}

/* ---------- right window ---------- */

const PillButton = ({ className = "", children }: { className?: string; children: React.ReactNode }) => (
  <span className={`flex shrink-0 items-center justify-center rounded-[20px] border-2 border-[#d6d6d6] bg-[linear-gradient(180deg,#fff,#ededed_50%,#fdfdfd)] ${className}`}>{children}</span>
);
const Sep = ({ className }: { className: string }) => <span className={`h-[75px] w-[5px] shrink-0 border-r-2 border-l-2 border-l-[#c6c6c6] border-r-white ${className}`} />;

function Gear() {
  const pts: string[] = [];
  for (let i = 0; i < 8; i++) {
    [[-0.24, 21], [-0.15, 30], [0.15, 30], [0.24, 21]].forEach(([da, r]) => {
      const a = (i * Math.PI) / 4 - Math.PI / 2 + da;
      pts.push(`${30 + Math.cos(a) * r},${30 + Math.sin(a) * r}`);
    });
  }
  return (
    <svg viewBox="0 0 60 60" className="ml-[29px] h-[60px] w-[60px] shrink-0">
      <polygon points={pts.join(" ")} fill="#cdcddb" stroke="#6c6c74" strokeWidth="2.500" strokeLinejoin="round" />
      <circle cx="30" cy="30" r="13" fill="#dcdce4" stroke="#77777f" strokeWidth="3" />
      <circle cx="30" cy="30" r="7.500" fill="#b9b9d6" stroke="#85858f" strokeWidth="2" />
    </svg>
  );
}

function EbookToolbar() {
  return (
    <div className="flex h-[115px] w-[1774px] items-center rounded-[18px] bg-[#e4e4e4] pb-[2px] pl-[27px] font-['Liberation_Sans'] text-[30px] leading-[40px]">
      <PillButton className="h-[54px] w-[73px]">
        <svg viewBox="0 0 24 34" className="mr-[6px] h-[34px] w-6"><path d="M24 0v34L0 17z" fill="#1484dd" /></svg>
      </PillButton>
      <span className="ml-[9px] flex h-[60px] w-[82px] items-center justify-center border-3 border-dotted border-[#222]">
        <PillButton className="mt-[3px] h-[53px] w-[73px]">
          <svg viewBox="0 0 24 34" className="ml-[6px] h-[34px] w-6"><path d="M0 0v34l24-17z" fill="#1484dd" /></svg>
        </PillButton>
      </span>
      <span className="ml-[25px] flex h-[54px] w-[163px] items-center border-t-3 border-l-3 border-[#868686] bg-white pb-[2px] pl-[4px] text-[#5f5f5f]">
        <Fit className="w-[140px]">jump to pg</Fit>
      </span>
      <PillButton className="ml-[12px] h-[54px] w-[89px] pb-[2px] font-bold text-[#3c3c3c]">go</PillButton>
      <Sep className="ml-[22px]" />
      <span className="ml-[10px] flex h-[60px] w-[320px] shrink-0 items-center overflow-hidden rounded-[14px] border-t-3 border-r-2 border-b-3 border-l-2 border-t-[#777] border-r-[#3a70c4] border-b-[#555] border-l-[#999] bg-[linear-gradient(180deg,#fff,#f3f3f3_50%,#e6e6e6_52%,#fcfcfc)] pl-[18px] text-[35px] text-[#4a4a4a]">
        <Fit className="w-[219px] font-medium [-webkit-text-stroke:0.8px_#4a4a4a]">book contents</Fit>
        <span className="ml-auto flex h-[60px] w-[51px] flex-col items-center justify-center gap-[10px] bg-[linear-gradient(180deg,#7ba2de,#8fbcf0_45%,#5fa4f0_52%,#a8f2ff)]">
          <svg viewBox="0 0 12 11" className="h-[11px] w-3"><path d="M0 11L6 0l6 11z" fill="#111" /></svg>
          <svg viewBox="0 0 12 11" className="h-[11px] w-3"><path d="M0 0l6 11L12 0z" fill="#111" /></svg>
        </span>
      </span>
      <Sep className="ml-[10px]" />
      <svg viewBox="0 0 60 60" className="ml-[27px] h-[60px] w-[60px] shrink-0">
        <path d="M47 1l12 9-35 41-13-10z" fill="#ffee00" stroke="#c9b800" strokeWidth="1" />
        <path d="M52 4l7 6-35 41-6-5z" fill="#e3cc00" />
        <path d="M11 37l14 13-16 5-7 3z" fill="#332c2c" /><path d="M1 53l5 3-4 4z" fill="#f0dc00" />
      </svg>
      <svg viewBox="0 0 58 62" className="ml-[30px] h-[62px] w-[58px] shrink-0">
        <rect x="2" y="3" width="56" height="59" fill="#b5b59c" /><rect width="55" height="60" fill="#ffff99" /><rect width="55" height="15" fill="#ffdd00" />
      </svg>
      <svg viewBox="0 0 56 62" className="ml-[30px] h-[62px] w-[56px] shrink-0">
        <path d="M5 1h37l13 14v46H5z" fill="#f3f3f3" stroke="#777" strokeWidth="2" /><path d="M41 0l14 15H41z" fill="#7cc4f2" />
        <path d="M1 8l8-6 17 26 10 12-10 2-3 10-6-11C6 30-1 20 1 8z" fill="#b4487f" /><path d="M20 27l6 1 10 12-10 2-3 10-5-13z" fill="#8e1f55" />
      </svg>
      <svg viewBox="0 0 60 62" className="ml-[29px] h-[62px] w-[60px] shrink-0">
        <rect x="12" y="1" width="36" height="30" fill="#e8e8e8" stroke="#888" strokeWidth="2" />
        <path d="M6 24h48l6 14v10q0 3-3 3H3q-3 0-3-3V38z" fill="#6ba3d8" stroke="#345" strokeWidth="1" />
        <rect x="6" y="24" width="48" height="14" rx="4" fill="#d9d9d9" stroke="#333" strokeWidth="2.500" /><path d="M8 32h44" stroke="#333" strokeWidth="3" />
        <rect x="8" y="46" width="44" height="5" fill="#16233a" /><rect x="10" y="49" width="40" height="12" fill="#eee" stroke="#555" strokeWidth="2" />
      </svg>
      <Gear />
      <Sep className="ml-[31px]" />
      <span className="ml-[28px] flex h-[54px] w-[277px] shrink-0 items-center border-t-3 border-l-3 border-[#868686] bg-white pb-[2px] pl-[5px] text-[#5f5f5f]">
        <Fit className="w-[179px]">search ebook</Fit>
      </span>
      <PillButton className="ml-[19px] h-[54px] w-[88px] pb-[2px] font-bold text-[#3c3c3c]">go</PillButton>
    </div>
  );
}

const blue = "#5b9dbd";
const Grad = () => (
  <defs>
    <linearGradient id="glass" x1="0" y1="0.6" x2="1" y2="0.4"><stop offset="0" stopColor="#e0ecf2" /><stop offset="1" stopColor="#a9cbda" /></linearGradient>
    <linearGradient id="glassUp" x1="0.2" y1="1" x2="0.9" y2="0"><stop offset="0" stopColor="#e2eef3" /><stop offset="1" stopColor="#a3c8d8" /></linearGradient>
  </defs>
);

const It = (p: { x: number; y: number; w?: number; children: React.ReactNode }) => (
  <Tx x={p.x} y={p.y} s={29} w={p.w} c="#2b2626" className="italic [stroke-width:0.8px] [stroke:#2b2626]">{p.children}</Tx>
);
const Eq = ({ x, y, w, a, b }: { x: number; y: number; w: number; a: string; b: string }) => (
  <It x={x} y={y} w={w}>{a} = {b}<tspan dy="-8" fontSize="21" fontStyle="normal">2</tspan></It>
);
const Half = ({ x, y, t }: { x: number; y: number; t: string }) => (
  <g textAnchor="middle">
    <It x={x} y={y - 8}>{t}</It>
    <L d={`M${x - 8} ${y}h16`} />
    <Tx x={x} y={y + 23} s={27} c="#2b2626">2</Tx>
  </g>
);

function Fig32() {
  return (
    <svg viewBox="2640 410 410 350" className={`mt-[5px] ml-[493px] block h-[350px] w-[410px] ${serif}`}>
      <Grad />
      <L d="M2717 418V702M2717 709V755M2650 514H2710M2725 514.500H2885M2898 526V698M2898 707V755M2650 701H2708M2717 701H3037" />
      <path d="M2717 701C2722 600 2790 555 2899 514C2884 600 2815 700 2717 701Z" fill="url(#glassUp)" stroke={blue} strokeWidth="3" />
      <Arr p={[2664, 516, 2664, 592]} start />
      <Arr p={[2664, 622, 2664, 700]} end />
      <Arr p={[2718, 741, 2793, 741]} start />
      <Arr p={[2822, 741, 2897, 741]} end />
      <Arr p={[2783, 494, 2808, 561]} end />
      <Arr p={[2921, 654, 2850, 616]} end />
      <It x={2698} y={432}>y</It>
      <Eq x={2741} y={488} w={85} a="x" b="ky" />
      <Eq x={2929} y={666} w={81} a="y" b="kx" />
      <It x={2657} y={614}>a</It>
      <It x={2802} y={750}>a</It>
      <It x={3027} y={723}>x</It>
    </svg>
  );
}

function Fig33() {
  return (
    <svg viewBox="2630 905 430 320" className={`mt-[10px] ml-[483px] block h-[320px] w-[430px] ${serif}`}>
      <L d="M2662 912V1134M2938 1001H2981M2938 1078H2981M2805 1160H3051M2934.500 1084V1206M2662 1164V1206M2800 1164V1206" />
      <path d="M2662 1159C2666 1060 2790 1015 2934 1001V1078L2800 1159Z" fill="url(#glass)" stroke={blue} strokeWidth="3" />
      <Arr p={[2969, 1002, 2969, 1077]} start end />
      <Arr p={[2969, 1079, 2969, 1159]} start end />
      <Arr p={[2663, 1195, 2715, 1195]} start />
      <Arr p={[2744, 1195, 2799, 1195]} end />
      <Arr p={[2801, 1195, 2854, 1195]} start />
      <Arr p={[2880, 1195, 2933, 1195]} end />
      <Arr p={[2781, 989, 2809, 1022]} end />
      <It x={2638} y={927}>y</It>
      <Eq x={2737} y={985} w={85} a="x" b="ky" />
      <Half x={2989} y={1041} t="b" />
      <Half x={2989} y={1122} t="b" />
      <Half x={2730} y={1195} t="a" />
      <Half x={2866} y={1195} t="a" />
      <It x={3038} y={1181}>x</It>
    </svg>
  );
}

function Fig34() {
  return (
    <svg viewBox="2595 1368 500 334" className={`mt-[7px] ml-[448px] block h-[334px] w-[500px] ${serif}`}>
      <L d="M2627 1376V1643M2798 1450H3008M2800 1548H3008M2963 1648H3083M2627 1653V1696M2792 1653V1696M2960 1653V1696" />
      <path d="M2629 1648C2705 1640 2765 1580 2796 1450V1549L2960 1648Z" fill="url(#glass)" stroke={blue} strokeWidth="3" />
      <L d="M2629 1648.500H2962" c="#7fb0cb" w={4.5} />
      <Arr p={[2995, 1451, 2995, 1484]} start />
      <Arr p={[2995, 1514, 2995, 1547]} end />
      <Arr p={[2995, 1549, 2995, 1583]} start />
      <Arr p={[2995, 1613, 2995, 1647]} end />
      <Arr p={[2628, 1682, 2701, 1682]} start />
      <Arr p={[2723, 1682, 2791, 1682]} end />
      <Arr p={[2793, 1682, 2866, 1682]} start />
      <Arr p={[2888, 1682, 2958, 1682]} end />
      <Arr p={[2717, 1494, 2761, 1538]} end />
      <It x={2604} y={1391}>y</It>
      <Eq x={2673} y={1490} w={84} a="y" b="kx" />
      <It x={2990} y={1509}>b</It>
      <It x={2990} y={1610}>b</It>
      <It x={2704} y={1689}>a</It>
      <It x={2871} y={1689}>a</It>
      <It x={3072} y={1667}>x</It>
    </svg>
  );
}

function Fig35() {
  return (
    <svg viewBox="2635 1900 120 143" className={`mt-[7px] ml-[488px] block h-[143px] w-[120px] ${serif}`}>
      <L d="M2691 1907V1984M2645 1990.500H2687" />
      <path d="M2690 1990H2713L2722 2050H2690Z" fill="#dbe9f0" stroke={blue} strokeWidth="3" />
      <Arr p={[2657, 1991, 2657, 2050]} start />
      <It x={2670} y={1921}>y</It>
    </svg>
  );
}

const Answer = ({ className }: { className: string }) => (
  <div className={`ml-[170px] h-[39px] w-[107px] border-b-3 border-[#555] ${serif} text-[32.5px] leading-[37px] font-bold whitespace-nowrap text-[#1285d8] ${className}`}>Answer</div>
);
const Caption = ({ className, children }: { className: string; children: React.ReactNode }) => (
  <div className={`ml-[170px] h-[40px] ${serif} text-[30px] leading-[40px] font-bold text-[#333] ${className}`}>{children}</div>
);

function RightWindow() {
  return (
    <div className="relative flex h-[2060px] w-[1918px] shrink-0 flex-col overflow-hidden border-t-2 border-r-2 border-b-2 border-t-[#74807f] border-r-[#1c355e] border-b-[#1c355e] bg-white">
      <div className="flex h-[69px] items-center border-b border-[#b1a9ab] bg-[linear-gradient(180deg,#a9bcc4,#adc1c8_45%,#a2b5bf)] pl-[10px]">
        <span className="mb-[2px] flex h-10 w-10 items-center justify-center bg-[#e61b24] font-['Open_Sans'] text-[36px] leading-none font-extrabold text-white">M</span>
        <Fit className="ml-[13px] w-[625px] font-['Noto_Sans'] text-[29px] leading-[40px] text-[#66747b]">McGraw-Hill Connect | ebook - Google Chrome</Fit>
        <div className="ml-auto flex h-[74px] pt-[3px]"><WinButtons color="#65757c" /></div>
      </div>
      <div className="flex h-[69px] items-center border-b-2 border-[#adadad] bg-[#f1f3f5] pl-[35px] font-['Noto_Sans'] text-[34px] leading-[50px]">
        <Lock />
        <Fit className="ml-[30px] w-[407px] text-[#202124]">connect.mheducation.com</Fit>
        <Fit className="w-[1378px] text-[#80868b]">/connect/hmEBook.do?action=itemLevel&amp;isbn=1259748685&amp;location=id_1259748685_...</Fit>
      </div>
      <EbookToolbar />
      <div className="flex h-[1788px]">
        <div className="w-[175px] pt-[1597px]">
          <div className="flex h-[33px] w-[108px] items-center border-t-2 border-b-2 border-dotted border-[#555] pl-[3px] font-['Noto_Sans'] text-[25px] leading-[30px] text-[#222]">
            <Fit className="w-[104px]">Page 240</Fit>
          </div>
        </div>
        <div className="h-[1788px] w-[1350px] overflow-hidden border-x-[50px] border-[#0066b5] bg-[#e1e7f5]">
          <Caption className="-mt-[33px] text-[29px]">Fig. P5.31</Caption>
          <Answer className="mt-[46px]" />
          <div className={`mt-[16px] ml-[71px] flex h-[42px] ${serif} text-[32.5px] leading-[42px] text-[#333]`}>
            <Fit className="w-[241px] font-bold text-[#0066b3]">5.32 through 5.34</Fit>
            <Fit className="ml-[49px] w-[818px] bg-[#bdbec5]">Determine by direct integration the centroid of the area shown.</Fit>
          </div>
          <Fig32 />
          <Caption className="mt-[12px]">Fig. P5.32</Caption>
          <Answer className="mt-[45px]" />
          <Fig33 />
          <Caption className="mt-[11px]">Fig. P5.33</Caption>
          <Answer className="mt-[45px]" />
          <Fig34 />
          <Caption className="mt-[11px]">Fig. P5.34</Caption>
          <Answer className="mt-[45px]" />
          <div className={`mt-[14px] ml-[89px] flex h-[42px] ${serif} text-[32.5px] leading-[43px] text-[#333]`}>
            <Fit className="w-[57px] font-bold text-[#0066b3]">5.35</Fit>
            <Fit className="ml-[24px] w-[736px]">Determine the centroid of the area shown when <i>a</i> = 4 in.</Fit>
          </div>
          <Fig35 />
        </div>
        <div className="flex flex-1 justify-end pt-[1325px]">
          <span className="h-[113px] w-[25px] bg-[#858585]" />
        </div>
      </div>
      <div className="h-[15px] w-[1490px] bg-[#858585]" />
      <div className="absolute inset-y-0 left-0 w-[18px] bg-[linear-gradient(90deg,rgba(0,0,0,0.16),transparent)]" />
    </div>
  );
}

/* ---------- taskbar ---------- */

function Taskbar() {
  return (
    <div className="flex h-[100px] items-center bg-[linear-gradient(90deg,#cfe6ee_0%,#d2e6ee_35%,#d0dfec_60%,#d4dae9_85%,#d3ddec_100%)] font-['Noto_Sans'] text-black">
      <svg viewBox="0 0 40 40" className="ml-[40px] h-10 w-10">
        <path d="M0 6l17-3v16H0zM19 2.500L40 0v19H19zM0 21h17v16L0 34zM19 21h21v19l-21-3z" fill="#000" />
      </svg>
      <div className="ml-[41px] flex h-[100px] w-[859px] items-center border-x-2 border-t-3 border-b-3 border-[#c8cbcc] bg-white pl-[29px]">
        <svg viewBox="0 0 48 48" className="h-12 w-12">
          <circle cx="30" cy="17" r="15.500" fill="none" stroke="#000" strokeWidth="3" /><path d="M19 28L1 47" stroke="#000" strokeWidth="3" />
        </svg>
        <Fit className="mt-[3px] ml-[32px] w-[323px] text-[37px] leading-[50px] text-[#333]">Type here to search</Fit>
      </div>
      <svg viewBox="0 0 42 42" className="ml-[39px] h-[42px] w-[42px]">
        <circle cx="21" cy="21" r="17" fill="none" stroke="#6f7c80" strokeWidth="7" /><circle cx="21" cy="21" r="16" fill="none" stroke="#000" strokeWidth="4.500" />
      </svg>
      <svg viewBox="0 0 40 40" className="ml-[78px] h-10 w-10">
        <path d="M1.500 1v7h24V1M1.500 39v-7h24v7M1.500 12h24v16h-24zM37 1v9M37 22v17" fill="none" stroke="#000" strokeWidth="2.600" /><circle cx="37" cy="16" r="3" fill="#000" />
      </svg>
      <FaEdgeLegacy className="ml-[82px] h-[54px] w-[54px] text-[#0078d7]" />
      <svg viewBox="0 0 54 46" className="ml-[70px] h-[46px] w-[54px]">
        <path d="M0 2h22l3 6v6H0z" fill="#dd9b0d" /><path d="M0 9h54v32H0z" fill="#ffd257" /><path d="M0 34h54v7H0z" fill="#fbc531" />
        <path d="M9 45V28q0-4 4-4h28q4 0 4 4v17H35V34H19v11z" fill="#3a96dd" />
      </svg>
      <svg viewBox="0 0 60 48" className="ml-[66px] h-12 w-[60px]">
        <path d="M0 15L30 1l30 14v33H0z" fill="#3d4448" /><path d="M2 16h56L33 31l17 12-28-15z" fill="#d3e7ee" />
      </svg>
      <div className="ml-[34px] flex h-[100px] w-[120px] flex-col border-r-[7px] border-[#dbe9f0] bg-[#eaf3f6]">
        <div className="flex h-[95px] items-center justify-center pl-[7px]">
          <svg viewBox="0 0 56 56" className="mt-[4px] h-14 w-14">
            <circle cx="28" cy="28" r="27" fill="#ffcd41" />
            <path d="M4.600 14.500A27 27 0 0 1 51.400 14.500H28z" fill="#db4437" />
            <path d="M4.600 14.500A27 27 0 0 0 26 55L38 34 28 28z" fill="#17a05d" />
            <path d="M4.600 14.500H51.400L28 28 17 34z" fill="#db4437" />
            <path d="M51.400 14.500A27 27 0 0 1 26 55L39 34 36 15.500z" fill="#ffcd41" />
            <circle cx="28" cy="28" r="12.500" fill="#f1f1f1" /><circle cx="28" cy="28" r="10" fill="#4a86f0" />
          </svg>
        </div>
        <div className="h-[5px] w-[120px] shrink-0 bg-[#0078d7]" />
      </div>
      <svg viewBox="0 0 34 18" className="ml-[1522px] h-[18px] w-[34px]"><path d="M1 17L17 1l16 16" fill="none" stroke="#000" strokeWidth="2.600" /></svg>
      <svg viewBox="0 0 40 22" className="ml-[45px] h-[22px] w-10">
        <rect x="1.200" y="1.200" width="34" height="19.600" fill="none" stroke="#000" strokeWidth="2.400" /><rect x="5" y="5" width="15" height="12" fill="#000" /><rect x="36" y="7" width="3.500" height="8" fill="#000" />
      </svg>
      <svg viewBox="0 0 32 32" className="ml-[45px] h-8 w-8">
        <path d="M1.500 32C1.500 14 14 2 31 2M9 32C9 19 18 10 31 10M17 32C17 24 22 18 31 18" fill="none" stroke="#000" strokeWidth="2.400" /><circle cx="27" cy="28" r="3.200" fill="#000" />
      </svg>
      <svg viewBox="0 0 36 28" className="ml-[41px] h-7 w-9">
        <path d="M1.500 8h6L13 2v24l-5.500-6h-6z" fill="none" stroke="#000" strokeWidth="2.200" /><path d="M21 7l14 14M35 7L21 21" stroke="#000" strokeWidth="2.200" />
      </svg>
      <div className="ml-[42px] flex w-[133px] flex-col items-center text-[29px] leading-[47px]">
        <Fit className="w-[102px]">1:53 PM</Fit>
        <Fit className="w-[133px]">10/8/2019</Fit>
      </div>
      <div className="relative ml-[47px] h-[42px] w-[42px]">
        <svg viewBox="0 0 42 42" className="h-[42px] w-[42px]">
          <path d="M0 0h40v34H24v8l-9-8H0z" fill="#000" /><path d="M8 9h24M8 17h24M8 25h16" stroke="#dde4ee" strokeWidth="2.500" />
        </svg>
        <span className="absolute top-[18px] left-[18px] flex h-[41px] w-[41px] items-center justify-center rounded-full border-2 border-[#777] bg-[#cfd1d6]/90 text-[26px] leading-none font-semibold">6</span>
      </div>
      <span className="ml-[48px] h-[100px] w-[3px] bg-[#aab2c2]" />
    </div>
  );
}

export default function App() {
  return (
    <div className="flex h-[2160px] w-[3840px] flex-col overflow-hidden">
      <div className="flex h-[2060px]">
        <div className="h-[2060px] w-[28px] shrink-0 overflow-hidden bg-[linear-gradient(90deg,transparent_55%,rgba(0,40,80,0.3)),linear-gradient(180deg,#0099f2_0%,#009ff8_25%,#00aeff_60%,#00b4ff_100%)] font-['Noto_Sans'] text-[30px] leading-[41px] text-white [text-shadow:1px_2px_3px_#000]">
          <div className="mt-[133px] ml-[21px]">P</div>
          <div className="mt-[452px] ml-[11px]">T</div>
          <div className="ml-[15px]">C</div>
          <div className="mt-[660px] ml-[8px]">d</div>
        </div>
        <LeftWindow />
        <RightWindow />
      </div>
      <Taskbar />
    </div>
  );
}
